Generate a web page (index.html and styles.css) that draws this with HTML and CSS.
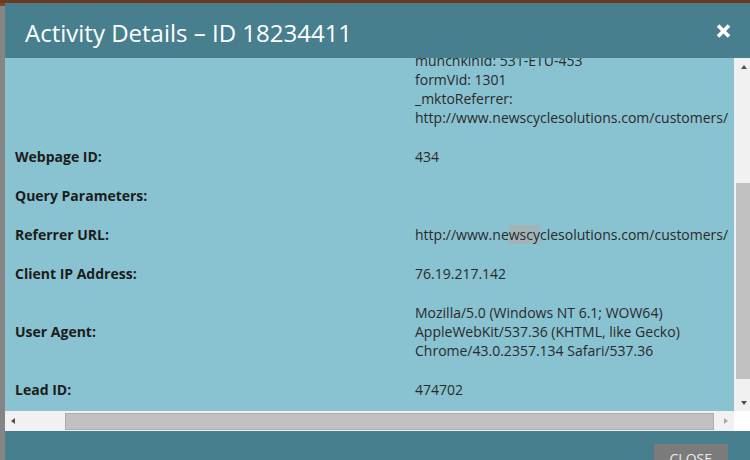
FILE: index.html
```html
<!DOCTYPE html>
<html lang="en">
<head>
    <meta charset="UTF-8">
    <meta name="viewport" content="width=device-width, initial-scale=1.0">
    <title>Activity Details</title>
    <link rel="stylesheet" href="styles.css">
</head>
<body>

    <div class="topbar"></div>

    <div class="page">
        <!-- edge of the page behind the dialog -->
        <div class="behind"></div>

        <div class="dialog">
            <div class="dialog-header">
                <h1>Activity Details &ndash; ID 18234411</h1>
                <svg class="close-x" width="15" height="14" viewBox="0 0 15 14">
                    <path d="M2 1.5 L13 12.5 M13 1.5 L2 12.5" stroke="#fff" stroke-width="3.6" fill="none"/>
                </svg>
            </div>

            <div class="dialog-body">
                <div class="viewport" id="view">
                    <div class="details">
                        <div class="row">
                            <div class="label">Form Name:</div>
                            <div class="value">Customers Contact Form</div>
                        </div>
                        <div class="row">
                            <div class="label">Form Fields:</div>
                            <div class="value">
                                <div>FirstName: Jim</div>
                                <div>LastName: Walker</div>
                                <div>Email: jwalker@newscycle.com</div>
                                <div>Company: NewsCycle Solutions</div>
                                <div>Phone: 651-639-0662</div>
                                <div>Country: United States</div>
                                <div id="mark">munchkinId: 531-ETU-453</div>
                                <div>formVid: 1301</div>
                                <div>_mktoReferrer:</div>
                                <div>http://www.newscyclesolutions.com/customers/</div>
                            </div>
                        </div>
                        <div class="row">
                            <div class="label">Webpage ID:</div>
                            <div class="value">434</div>
                        </div>
                        <div class="row">
                            <div class="label">Query Parameters:</div>
                            <div class="value">&nbsp;</div>
                        </div>
                        <div class="row">
                            <div class="label">Referrer URL:</div>
                            <div class="value">http://www.ne<span class="hl">wscy</span>clesolutions.com/customers/</div>
                        </div>
                        <div class="row">
                            <div class="label">Client IP Address:</div>
                            <div class="value">76.19.217.142</div>
                        </div>
                        <div class="row">
                            <div class="label">User Agent:</div>
                            <div class="value">
                                <div>Mozilla/5.0 (Windows NT 6.1; WOW64)</div>
                                <div>AppleWebKit/537.36 (KHTML, like Gecko)</div>
                                <div>Chrome/43.0.2357.134 Safari/537.36</div>
                            </div>
                        </div>
                        <div class="row">
                            <div class="label">Lead ID:</div>
                            <div class="value">474702</div>
                        </div>
                    </div>
                </div>

                <!-- vertical scrollbar -->
                <div class="vscroll">
                    <div class="arrow arrow-up"></div>
                    <div class="vtrack">
                        <div class="vthumb"></div>
                    </div>
                    <div class="arrow arrow-down"></div>
                </div>
            </div>

            <!-- horizontal scrollbar -->
            <div class="hscroll">
                <div class="hbar">
                    <div class="arrow arrow-left"></div>
                    <div class="htrack">
                        <div class="hthumb"></div>
                    </div>
                    <div class="arrow arrow-right"></div>
                </div>
                <div class="corner"></div>
            </div>

            <div class="dialog-footer">
                <button class="close-btn">CLOSE</button>
            </div>
        </div>
    </div>

    <script>
        // the list is scrolled down to the form fields
        const view = document.getElementById('view');
        const mark = document.getElementById('mark');
        view.scrollTop = mark.offsetTop + 7;
    </script>

</body>
</html>
```

FILE: styles.css
```css
body {
    margin: 0;
    padding: 0;
    background-color: #7e7e7e;
    font-family: "Open Sans", "Liberation Sans", sans-serif;
    height: 460px;
    overflow: hidden;
}

.topbar {
    height: 3px;
    background-color: #6b3a1b;
}

.page {
    display: flex;
}

.behind {
    width: 5px;
    height: 457px;
    background: linear-gradient(#7a4a26 0, #7a4a26 3px, #858585 3px);
}

.dialog {
    width: 745px;
    display: flex;
    flex-direction: column;
}

.dialog-header {
    height: 55px;
    background-color: #477f8f;
    display: flex;
    align-items: center;
    justify-content: space-between;
    padding: 0 19px 0 20px;
}

.dialog-header h1 {
    margin: 0;
    padding-top: 4px;
    font-size: 24px;
    font-weight: 400;
    color: #ffffff;
}

.close-x {
    margin-top: 1px;
}

.dialog-body {
    display: flex;
    height: 353px;
}

.viewport {
    position: relative;
    flex: 1;
    overflow: hidden;
    background-color: #89c3d1;
}

.details {
    padding: 0 0 10px 10px;
}

.row {
    display: grid;
    grid-template-columns: 400px auto;
    align-items: center;
    padding: 10px 0;
    font-size: 14px;
    line-height: 19px;
}

.label {
    font-weight: 700;
    color: #1c1c1c;
}

.value {
    color: #2a2a2a;
    white-space: nowrap;
}

.hl {
    background-color: #a3b4b9;
}

/* scrollbars */

.vscroll {
    width: 16px;
    background-color: #f1f1f1;
    display: flex;
    flex-direction: column;
}

.vtrack {
    flex: 1;
    display: flex;
    flex-direction: column;
    padding-top: 108px;
}

.vthumb {
    height: 196px;
    margin-left: 2px;
    background-color: #c1c1c1;
}

.arrow {
    width: 16px;
    height: 17px;
    display: flex;
    align-items: center;
    justify-content: center;
    flex-shrink: 0;
}

.arrow::after {
    content: "";
    width: 0;
    height: 0;
}

.arrow-up::after {
    border-left: 3.5px solid transparent;
    border-right: 3.5px solid transparent;
    border-bottom: 4px solid #505050;
    margin-left: 3px;
}

.arrow-down::after {
    border-left: 3.5px solid transparent;
    border-right: 3.5px solid transparent;
    border-top: 4px solid #505050;
    margin-left: 3px;
}

.arrow-left::after {
    border-top: 3.5px solid transparent;
    border-bottom: 3.5px solid transparent;
    border-right: 4px solid #505050;
}

.arrow-right::after {
    border-top: 3.5px solid transparent;
    border-bottom: 3.5px solid transparent;
    border-left: 4px solid #a8a8a8;
}

.hscroll {
    height: 20px;
    display: flex;
}

.hbar {
    flex: 1;
    display: flex;
    align-items: center;
    background-color: #f1f1f1;
}

.htrack {
    flex: 1;
    height: 20px;
    display: flex;
    align-items: center;
    padding-left: 44px;
    padding-right: 4px;
}

.hthumb {
    flex: 1;
    height: 15px;
    background-color: #c1c1c1;
    border: 1px solid #acacac;
}

.corner {
    width: 16px;
    background-color: #ffffff;
}

.dialog-footer {
    flex: 1;
    background-color: #477f8f;
    display: flex;
    justify-content: flex-end;
    padding: 13px 22px 0 0;
    min-height: 40px;
}

.close-btn {
    height: 28px;
    padding: 0 16px;
    background-color: #7b7b7b;
    color: #ebebeb;
    border: none;
    font-family: "Open Sans", "Liberation Sans", sans-serif;
    font-size: 14px;
    align-self: flex-start;
    cursor: pointer;
}
```
